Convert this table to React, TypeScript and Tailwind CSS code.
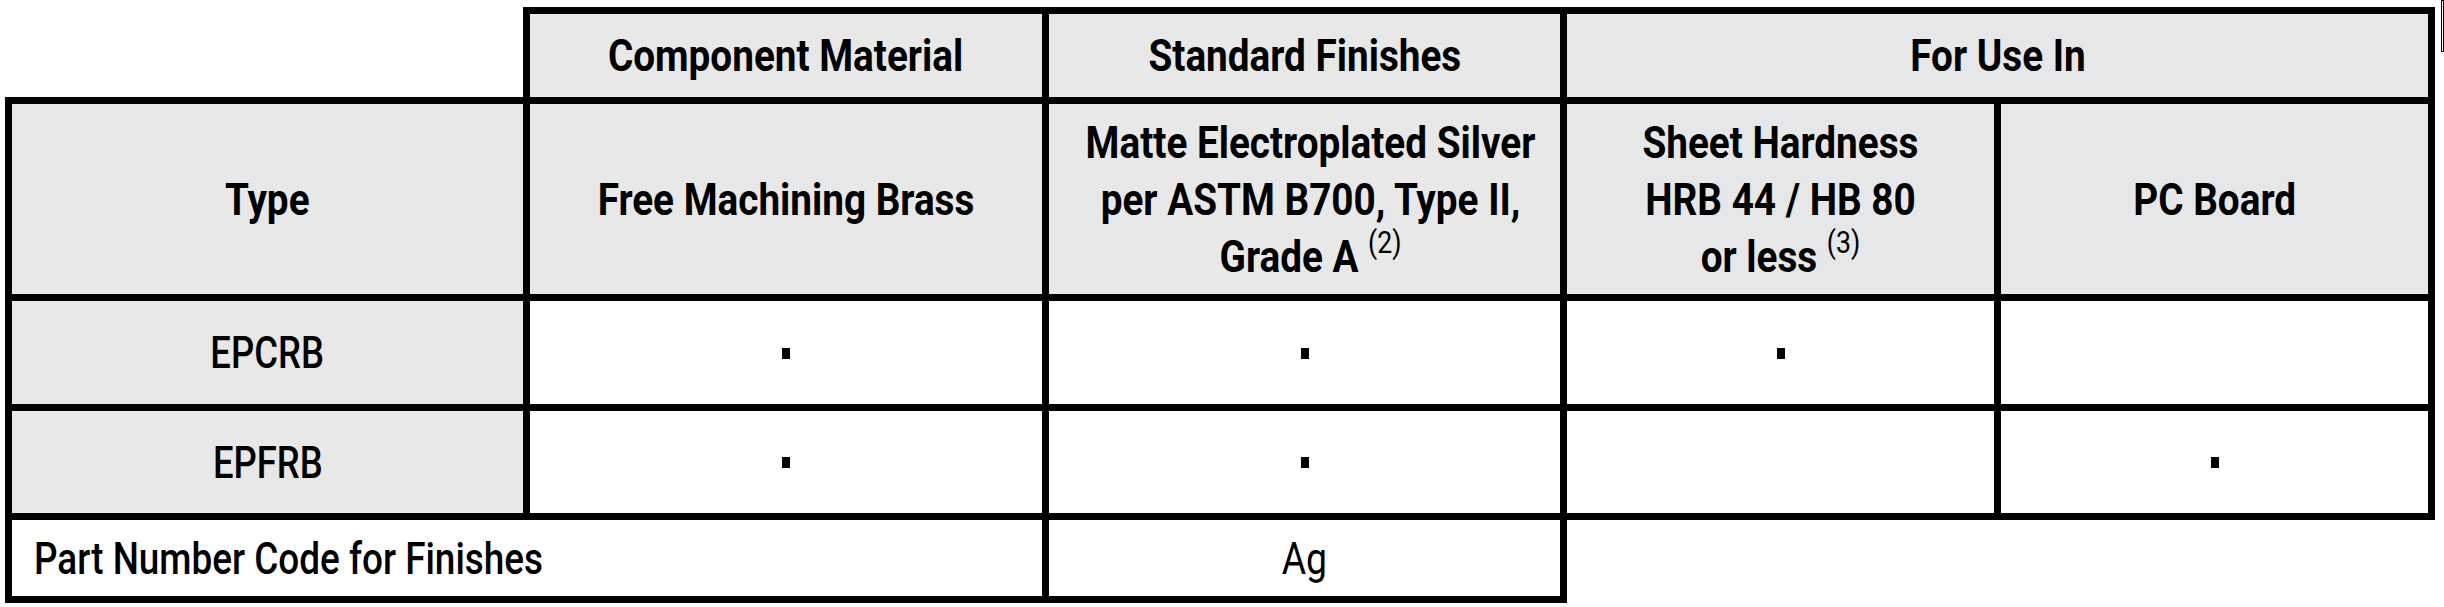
const cell = "border-[7px] border-solid border-black text-center align-middle p-0";
const head = "bg-[#e8e8e8]";
const use = "bg-[#e6e7e8]";

function T({ children, bold = true }: { children: React.ReactNode; bold?: boolean }) {
  return (
    <span
      className={`inline-block whitespace-nowrap text-[45px] leading-[57px] ${
        bold ? "font-bold scale-x-[0.86]" : "font-medium scale-x-[0.81]"
      }`}
    >
      {children}
    </span>
  );
}

function Dot() {
  return <span className="inline-block w-[8px] h-[11px] bg-black align-middle" />;
}

function Note({ n }: { n: number }) {
  return <sup className="text-[31px] font-normal -top-[0.6em]">({n})</sup>;
}

export default function App() {
  return (
    <div className="w-[2444px] h-[607px] bg-white text-black flex items-start font-['Roboto','Liberation_Sans',sans-serif]">
      <table className="ml-[5px] mt-[7px] table-fixed border-collapse w-[2430px]">
        <colgroup>
          <col className="w-[518px]" />
          <col className="w-[519px]" />
          <col className="w-[518px]" />
          <col className="w-[434px]" />
          <col className="w-[434px]" />
        </colgroup>
        <tbody>
          <tr className="h-[90px]">
            <td className="p-0 border-0" />
            <th className={`${cell} ${head}`}>
              <T>Component Material</T>
            </th>
            <th className={`${cell} ${head}`}>
              <T>Standard Finishes</T>
            </th>
            <th colSpan={2} className={`${cell} ${use}`}>
              <T>For Use In</T>
            </th>
          </tr>
          <tr className="h-[197px]">
            <th className={`${cell} ${head}`}>
              <T>Type</T>
            </th>
            <th className={`${cell} ${head}`}>
              <T>Free Machining Brass</T>
            </th>
            <th className={`${cell} ${head}`}>
              <T>
                Matte Electroplated Silver
                <br />
                per ASTM B700, Type II,
                <br />
                Grade A <Note n={2} />
              </T>
            </th>
            <th className={`${cell} ${use}`}>
              <T>
                Sheet Hardness
                <br />
                HRB 44 / HB 80
                <br />
                or less <Note n={3} />
              </T>
            </th>
            <th className={`${cell} ${use}`}>
              <T>PC Board</T>
            </th>
          </tr>
          <tr className="h-[110px]">
            <td className={`${cell} ${head}`}>
              <T bold={false}>EPCRB</T>
            </td>
            <td className={cell}>
              <Dot />
            </td>
            <td className={cell}>
              <Dot />
            </td>
            <td className={cell}>
              <Dot />
            </td>
            <td className={cell} />
          </tr>
          <tr className="h-[109px]">
            <td className={`${cell} ${head}`}>
              <T bold={false}>EPFRB</T>
            </td>
            <td className={cell}>
              <Dot />
            </td>
            <td className={cell}>
              <Dot />
            </td>
            <td className={cell} />
            <td className={cell}>
              <Dot />
            </td>
          </tr>
          <tr className="h-[83px]">
            <td colSpan={2} className={`${cell} text-left pl-[22px]`}>
              <span className="inline-block whitespace-nowrap origin-left scale-x-[0.82] text-[45px] leading-[57px] font-medium">
                Part Number Code for Finishes
              </span>
            </td>
            <td className={cell}>
              <span className="inline-block whitespace-nowrap scale-x-[0.83] text-[45px] leading-[57px] font-normal">
                Ag
              </span>
            </td>
            <td colSpan={2} className="p-0 border-0" />
          </tr>
        </tbody>
      </table>
      <div className="ml-[6px] w-[3px] h-[52px] border border-black" />
    </div>
  );
}
